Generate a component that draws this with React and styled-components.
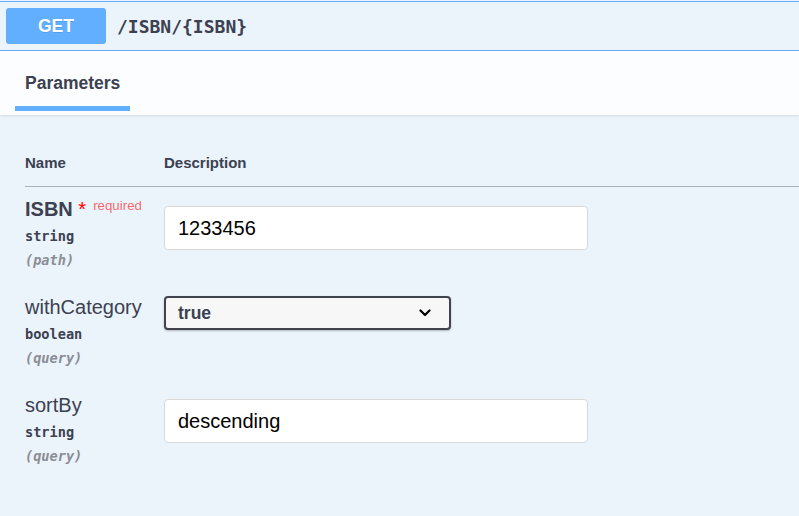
import styled, { createGlobalStyle } from "styled-components";

const GlobalStyle = createGlobalStyle`
  html, body {
    margin: 0;
    padding: 0;
  }
  body {
    background: #ebf3fb;
    color: #3b4151;
    font-family: "Liberation Sans", Arial, sans-serif;
    overflow: hidden;
  }
`;

const mono = `"DejaVu Sans Mono", "Liberation Mono", monospace`;

const Block = styled.div`
  margin-top: 1px;
  border-top: 1px solid #61affe;
  background: #ebf3fb;
  min-height: 514px;
`;

const Summary = styled.div`
  display: flex;
  align-items: center;
  gap: 11px;
  height: 48px;
  padding: 0 6px;
  border-bottom: 1px solid #61affe;
`;

const Method = styled.div`
  width: 100px;
  height: 36px;
  display: flex;
  align-items: center;
  justify-content: center;
  border-radius: 3px;
  background: #61affe;
  color: #fff;
  font-size: 17.5px;
  font-weight: 700;
  text-shadow: 0 1px 0 rgba(0, 0, 0, 0.1);
`;

const Path = styled.span`
  font-family: ${mono};
  font-size: 18px;
  font-weight: 700;
  color: #3b4151;
`;

const TabHeader = styled.div`
  display: flex;
  align-items: center;
  height: 64px;
  padding: 0 25px;
  background: rgba(255, 255, 255, 0.8);
  box-shadow: 0 1px 2px rgba(0, 0, 0, 0.1);
`;

const Tab = styled.div`
  position: relative;
  font-size: 17.5px;
  font-weight: 700;
  line-height: 24px;

  &::after {
    content: "";
    position: absolute;
    left: -10%;
    bottom: -16px;
    width: 120%;
    height: 5px;
    background: #61affe;
  }
`;

const Body = styled.div`
  padding: 38px 0 0 25px;
`;

const HeadRow = styled.div`
  display: grid;
  grid-template-columns: 139px 1fr;
  padding-bottom: 13px;
  border-bottom: 1px solid #acb1b9;
  font-size: 15px;
  font-weight: 700;
  line-height: 20px;
`;

const Row = styled.div`
  display: grid;
  grid-template-columns: 139px 1fr;
  align-items: start;
  padding: 10px 0 13px;
`;

const ParamName = styled.div`
  font-size: 20px;
  line-height: 24px;
  font-weight: ${(p) => (p.$required ? 700 : 400)};
  white-space: nowrap;
`;

const Star = styled.span`
  color: #f00;
  font-weight: 400;
`;

const Required = styled.span`
  position: relative;
  top: -6px;
  margin-left: 7px;
  font-size: 13.3px;
  font-weight: 400;
  line-height: 0;
  color: rgba(255, 0, 0, 0.6);
`;

const ParamType = styled.div`
  margin-top: 3px;
  font-family: ${mono};
  font-size: 13.6px;
  font-weight: 700;
  line-height: 24px;
`;

const ParamIn = styled.div`
  font-family: ${mono};
  font-size: 13.6px;
  font-style: italic;
  font-weight: 700;
  line-height: 24px;
  color: #8a8d94;
`;

const Field = styled.div`
  margin-top: ${(p) => p.$offset}px;
`;

const TextInput = styled.input`
  box-sizing: border-box;
  width: 424px;
  height: 44px;
  margin: 0;
  padding: 0 13px;
  border: 1px solid #d9d9d9;
  border-radius: 4px;
  background: #fff;
  color: #000;
  font-family: "Liberation Sans", Arial, sans-serif;
  font-size: 20px;
  outline: none;
`;

const SelectBox = styled.div`
  box-sizing: border-box;
  width: 287px;
  height: 34px;
  display: flex;
  align-items: center;
  justify-content: space-between;
  padding: 0 18px 0 12px;
  border: 2px solid #41444e;
  border-radius: 4px;
  background: #f7f7f7;
  box-shadow: 0 1px 2px rgba(0, 0, 0, 0.25);
  font-size: 17.5px;
  font-weight: 700;
  color: #3b4151;
`;

const Chevron = () => (
  <svg width="12" height="8" viewBox="0 0 12 8">
    <polyline
      points="1.5,1.5 6,6 10.5,1.5"
      fill="none"
      stroke="#000"
      strokeWidth="2.2"
      strokeLinecap="round"
      strokeLinejoin="round"
    />
  </svg>
);

const params = [
  { name: "ISBN", required: true, type: "string", in: "path", value: "1233456", offset: 9 },
  { name: "withCategory", type: "boolean", in: "query", value: "true", select: true, offset: 1 },
  { name: "sortBy", type: "string", in: "query", value: "descending", offset: 6 },
];

const App = () => {
  return (
    <>
      <GlobalStyle />
      <Block>
        <Summary>
          <Method>GET</Method>
          <Path>/ISBN/{"{ISBN}"}</Path>
        </Summary>
        <TabHeader>
          <Tab>Parameters</Tab>
        </TabHeader>
        <Body>
          <HeadRow>
            <div>Name</div>
            <div>Description</div>
          </HeadRow>
          {params.map((p) => (
            <Row key={p.name}>
              <div>
                <ParamName $required={p.required}>
                  {p.name}
                  {p.required && (
                    <>
                      <Star>&nbsp;*</Star>
                      <Required>required</Required>
                    </>
                  )}
                </ParamName>
                <ParamType>{p.type}</ParamType>
                <ParamIn>({p.in})</ParamIn>
              </div>
              <Field $offset={p.offset}>
                {p.select ? (
                  <SelectBox>
                    <span>{p.value}</span>
                    <Chevron />
                  </SelectBox>
                ) : (
                  <TextInput type="text" defaultValue={p.value} readOnly />
                )}
              </Field>
            </Row>
          ))}
        </Body>
      </Block>
    </>
  );
};

export default App;
